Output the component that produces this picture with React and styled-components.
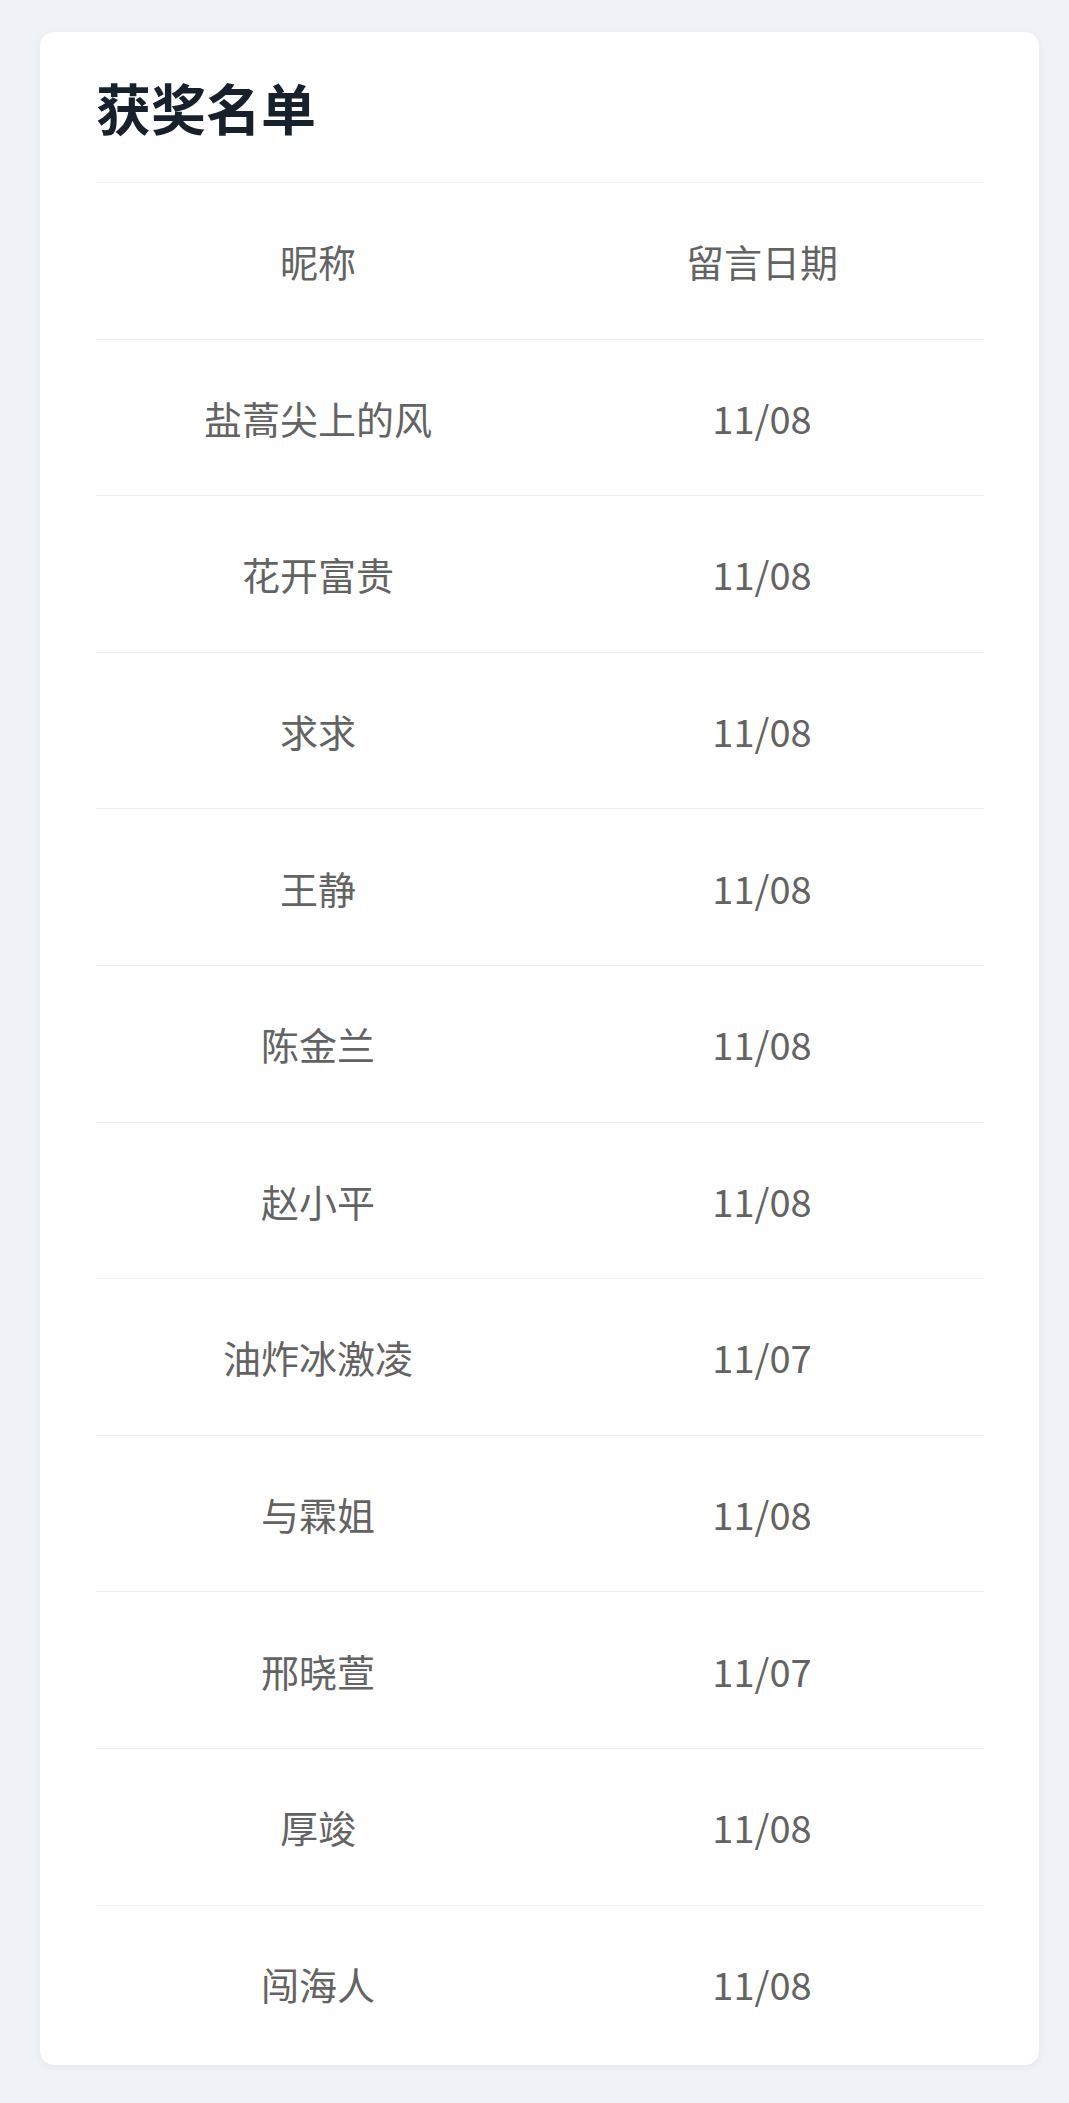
import styled, { createGlobalStyle } from "styled-components";

const winners = [
    { name: "盐蒿尖上的风", date: "11/08" },
    { name: "花开富贵", date: "11/08" },
    { name: "求求", date: "11/08" },
    { name: "王静", date: "11/08" },
    { name: "陈金兰", date: "11/08" },
    { name: "赵小平", date: "11/08" },
    { name: "油炸冰激凌", date: "11/07" },
    { name: "与霖姐", date: "11/08" },
    { name: "邢晓萱", date: "11/07" },
    { name: "厚竣", date: "11/08" },
    { name: "闯海人", date: "11/08" },
];

export default function App() {
    return (
        <>
            <GlobalStyle />
            <Page>
                <Card>
                    <Title>获奖名单</Title>
                    <Table>
                        <Row>
                            <Cell>昵称</Cell>
                            <Cell>留言日期</Cell>
                        </Row>
                        {winners.map((winner, index) => (
                            <Row key={index}>
                                <Cell>{winner.name}</Cell>
                                <Cell>{winner.date}</Cell>
                            </Row>
                        ))}
                    </Table>
                </Card>
            </Page>
        </>
    );
}

const GlobalStyle = createGlobalStyle`
    * {
        box-sizing: border-box;
    }
    body {
        margin: 0;
        background: #eff3f7;
        font-family: "Noto Sans CJK SC", "Noto Sans", sans-serif;
    }
`;

const Page = styled.div`
    padding: 32px 30px 39px 40px;
`;

const Card = styled.div`
    background: #fff;
    border-radius: 14px;
    box-shadow: 0 2px 8px rgba(30, 50, 80, 0.06);
    padding: 36px 55px 4px 56px;
`;

const Title = styled.h1`
    margin: 0 0 38px;
    font-size: 55px;
    line-height: 76px;
    font-weight: 700;
    color: #17202b;
`;

const Table = styled.div`
    display: flex;
    flex-direction: column;
`;

const Row = styled.div`
    display: grid;
    grid-template-columns: 1fr 1fr;
    align-items: center;
    height: 156.6px;
    border-top: 1px solid #ececec;
`;

const Cell = styled.div`
    text-align: center;
    font-size: 38px;
    color: #636363;
`;
